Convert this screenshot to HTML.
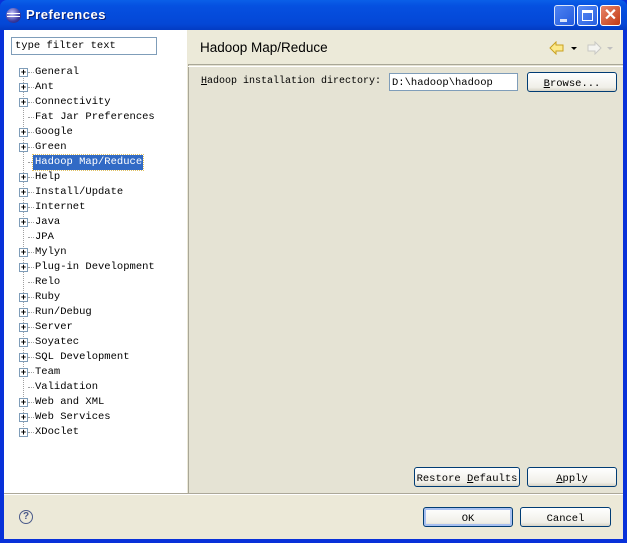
<!DOCTYPE html>
<html><head><style>
*{margin:0;padding:0;box-sizing:border-box}
body{width:627px;height:543px;overflow:hidden;background:#0831d9;font-family:"Liberation Mono",monospace;font-size:10px;color:#000;position:relative}
.abs{position:absolute}
.title{left:0;top:0;width:627px;height:30px;background:linear-gradient(#0a5fe8,#0550e0 20%,#0447d6 80%,#033bc2);border-radius:7px 7px 0 0}
.tt{left:26px;top:7px;color:#fff;font-family:"Liberation Sans",sans-serif;font-weight:bold;font-size:13px;letter-spacing:.5px;text-shadow:1px 1px #0a1e70}
.tb{top:5px;width:21px;height:21px;border:1px solid #fff;border-radius:3px;background:linear-gradient(135deg,#5a8cf5,#2a5fe0)}
.body{left:4px;top:30px;width:619px;height:509px;background:#ece9d8}
.left{left:4px;top:30px;width:183px;height:463px;background:#fff}
.right{left:188px;top:30px;width:435px;height:463px;background:#e5e3d4;border-left:1px solid #a9a797}
.btn{border:1px solid #003c74;border-radius:3px;background:linear-gradient(#fff,#f0efe8 80%,#d6d3c6);text-align:center;font-size:10.5px;line-height:18px;padding-top:2px}
.item{left:35px;font-size:10.5px;line-height:13px;white-space:nowrap}
.pl{left:19px;width:9px;height:9px;border:1px solid #7f9db9;background:#fff;font-size:9px;line-height:7px;text-align:center;font-family:"Liberation Sans",sans-serif;font-weight:bold}
.h{left:28px;width:6px;border-top:1px dotted #a0a0a0}
u{text-decoration:underline}
</style></head><body>
<div class="abs title"></div>
<div class="abs" style="left:6px;top:8px;width:15px;height:15px;border-radius:50%;background:radial-gradient(circle at 40% 35%,#c8c8ff,#3a3aa0 60%,#201e6a)"></div>
<div class="abs" style="left:7px;top:13px;width:13px;height:1px;background:#fff"></div>
<div class="abs" style="left:7px;top:16px;width:13px;height:1px;background:#fff"></div>
<div class="abs tt">Preferences</div>
<div class="abs tb" style="left:554px;opacity:.85"><div class="abs" style="left:5px;top:13px;width:7px;height:3px;background:#fff"></div></div>
<div class="abs tb" style="left:577px"><div class="abs" style="left:4px;top:4px;width:11px;height:11px;border:1px solid #fff;border-top-width:3px"></div></div>
<div class="abs tb" style="left:600px;background:linear-gradient(135deg,#e8856a,#c23a14);color:#fff;font:bold 16px/19px 'Liberation Sans',sans-serif;text-align:center">✕</div>
<div class="abs body"></div>
<div class="abs left"></div>
<div class="abs right"></div>
<div class="abs" style="left:11px;top:37px;width:146px;height:18px;border:1px solid #7f9db9;background:#fff;padding:2px 3px;line-height:13px;font-size:10.5px">type filter text</div>
<div class="abs" style="left:23px;top:72px;height:361px;border-left:1px dotted #a0a0a0"></div>
<div id="tree"></div>
<div class="abs" style="left:188px;top:30px;width:435px;height:35px;background:#ecead9;border-bottom:1px solid #a9a797"></div>
<div class="abs" style="left:188px;top:66px;width:435px;height:1px;background:#fff"></div>
<div class="abs" style="left:200px;top:40px;font-family:'Liberation Sans',sans-serif;font-size:13.5px">Hadoop Map/Reduce</div>
<svg class="abs" style="left:549px;top:41px" width="30" height="14"><path d="M1 7 L7 1 L7 4 L14 4 L14 10 L7 10 L7 13 Z" fill="#fce98a" stroke="#c8a020"/><path d="M22 6 L28 6 L25 9 Z" fill="#000"/></svg>
<svg class="abs" style="left:586px;top:41px" width="30" height="14"><path d="M15 7 L9 1 L9 4 L2 4 L2 10 L9 10 L9 13 Z" fill="#f4f4f0" stroke="#c8c8c4"/><path d="M21 6 L27 6 L24 9 Z" fill="#c0c0c0"/></svg>
<div class="abs" style="left:201px;top:76px"><u>H</u>adoop installation directory:</div>
<div class="abs" style="left:389px;top:73px;width:129px;height:18px;border:1px solid #7f9db9;background:#fff;padding:2px 2px;line-height:14px;font-size:10.5px">D:\hadoop\hadoop</div>
<div class="abs btn" style="left:527px;top:72px;width:90px;height:20px"><u>B</u>rowse...</div>
<div class="abs btn" style="left:414px;top:467px;width:106px;height:20px">Restore <u>D</u>efaults</div>
<div class="abs btn" style="left:527px;top:467px;width:90px;height:20px"><u>A</u>pply</div>
<div class="abs" style="left:4px;top:493px;width:619px;height:1px;background:#aca899"></div>
<div class="abs" style="left:4px;top:494px;width:619px;height:1px;background:#fff"></div>
<div class="abs" style="left:19px;top:510px;width:14px;height:14px;border:1px solid #4a5a8a;border-radius:50%;font:bold 10px/12px 'Liberation Sans',sans-serif;color:#4a5a8a;text-align:center">?</div>
<div class="abs btn" style="left:423px;top:507px;width:90px;height:20px;border-color:#003c74;box-shadow:inset 0 0 0 2px #a8c0f0">OK</div>
<div class="abs btn" style="left:520px;top:507px;width:91px;height:20px">Cancel</div>
<script>
var items=[["General",1],["Ant",1],["Connectivity",1],["Fat Jar Preferences",0],["Google",1],["Green",1],["Hadoop Map/Reduce",0],["Help",1],["Install/Update",1],["Internet",1],["Java",1],["JPA",0],["Mylyn",1],["Plug-in Development",1],["Relo",0],["Ruby",1],["Run/Debug",1],["Server",1],["Soyatec",1],["SQL Development",1],["Team",1],["Validation",0],["Web and XML",1],["Web Services",1],["XDoclet",1]];
var h="";items.forEach(function(it,i){var y=66+i*15;
h+='<div class="abs h" style="top:'+(y+6)+'px"></div>';
if(it[1])h+='<div class="abs pl" style="top:'+(y+2)+'px">+</div>';
if(i==6)h+='<div class="abs" style="left:33px;top:'+(y-1)+'px;width:110px;height:15px;background:#316ac5;outline:1px dotted #e0c060"></div><div class="abs item" style="top:'+y+'px;color:#fff">'+it[0]+'</div>';
else h+='<div class="abs item" style="top:'+y+'px">'+it[0]+'</div>';});
document.getElementById("tree").innerHTML=h;
</script>
</body></html>
